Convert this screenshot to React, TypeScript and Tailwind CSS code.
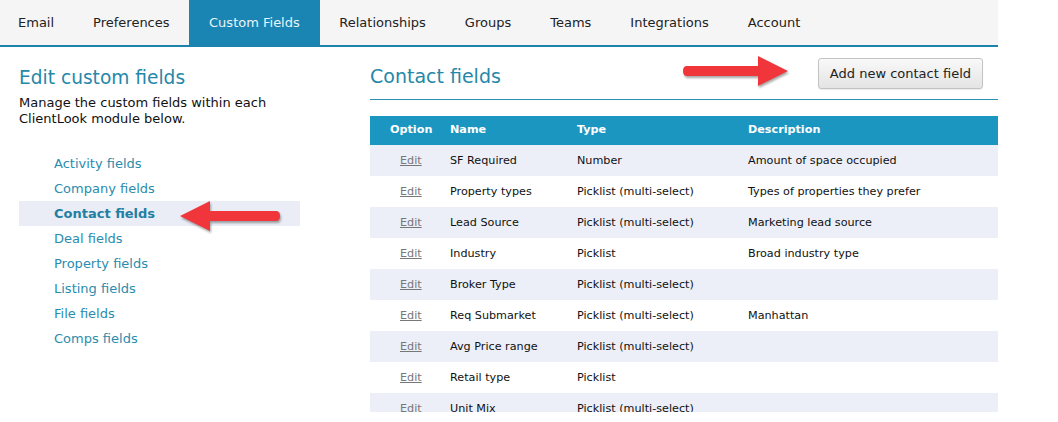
import React from "react";

const tabs = ["Email", "Preferences", "Custom Fields", "Relationships", "Groups", "Teams", "Integrations", "Account"];

const modules = [
  "Activity fields",
  "Company fields",
  "Contact fields",
  "Deal fields",
  "Property fields",
  "Listing fields",
  "File fields",
  "Comps fields",
];

const rows = [
  { name: "SF Required", type: "Number", desc: "Amount of space occupied" },
  { name: "Property types", type: "Picklist (multi-select)", desc: "Types of properties they prefer" },
  { name: "Lead Source", type: "Picklist (multi-select)", desc: "Marketing lead source" },
  { name: "Industry", type: "Picklist", desc: "Broad industry type" },
  { name: "Broker Type", type: "Picklist (multi-select)", desc: "" },
  { name: "Req Submarket", type: "Picklist (multi-select)", desc: "Manhattan" },
  { name: "Avg Price range", type: "Picklist (multi-select)", desc: "" },
  { name: "Retail type", type: "Picklist", desc: "" },
  { name: "Unit Mix", type: "Picklist (multi-select)", desc: "" },
];

function RedArrow({ dir, width }: { dir: "left" | "right"; width: number }) {
  const head = width - 30;
  return (
    <svg width={width + 4} height="34" viewBox={`0 0 ${width + 4} 34`} className="drop-shadow-[1px_2px_1px_rgba(0,0,0,0.35)]">
      <g transform={dir === "left" ? `translate(${width} 0) scale(-1 1)` : undefined}>
        <path
          d={`M4 12 H${head} V2 L${width} 17 L${head} 32 V22 H4 Q0 22 0 17 Q0 12 4 12 Z`}
          fill="#f0353b"
        />
      </g>
    </svg>
  );
}

export default function App() {
  return (
    <div className="h-[422px] w-[1058px] overflow-hidden bg-white text-[#222]" style={{ fontFamily: "Verdana, 'DejaVu Sans', sans-serif" }}>
      {/* top tabs */}
      <nav className="flex h-[47px] w-[998px] border-b-2 border-[#1b84ad] bg-[#f5f5f5] text-[13px]">
        {tabs.map((t) => (
          <div
            key={t}
            className={
              t === "Custom Fields"
                ? "flex items-center bg-[#1a85b2] px-[20px] text-[#e8f4fa]"
                : t === "Email"
                ? "flex items-center pl-[18px] pr-[19.5px] text-[#222]"
                : "flex items-center px-[19.5px] text-[#222]"
            }
          >
            {t}
          </div>
        ))}
      </nav>

      <div className="flex h-[365px] w-[998px] overflow-hidden">
        {/* sidebar */}
        <aside className="w-[300px] shrink-0 pl-[19px] pt-[18px]">
          <h1 className="text-[18.6px] leading-[26px] text-[#2688a8]">Edit custom fields</h1>
          <p className="mt-[4px] w-[270px] text-[13px] leading-[16px] text-[#111]">
            Manage the custom fields within each ClientLook module below.
          </p>
          <ul className="relative mt-[24px] text-[13px]">
            {modules.map((m) => (
              <li
                key={m}
                className={
                  m === "Contact fields"
                    ? "relative flex h-[25px] items-center bg-[#eaedf5] pl-[35px] font-bold text-[#1f7fa4]"
                    : "flex h-[25px] items-center pl-[35px] text-[#2b8cae]"
                }
              >
                {m}
                {m === "Contact fields" && (
                  <span className="absolute left-[161px] top-[-2px]">
                    <RedArrow dir="left" width={100} />
                  </span>
                )}
              </li>
            ))}
          </ul>
        </aside>

        {/* main */}
        <main className="ml-[70px] flex-1 pt-[11px]">
          <div className="relative flex h-[42px] items-center justify-between border-b border-[#2a8eb0] pb-[4px]">
            <h2 className="text-[19px] text-[#2688a8]">Contact fields</h2>
            <span className="absolute left-[313px] top-[-4px]">
              <RedArrow dir="right" width={105} />
            </span>
            <button className="mr-[15px] mt-[-6px] h-[31px] rounded-[3px] border border-[#c3c3c3] bg-gradient-to-b from-[#f9f9f9] to-[#e4e4e4] px-[11px] text-[13px] text-[#222] shadow-[0_1px_1px_rgba(0,0,0,0.08)]">
              Add new contact field
            </button>
          </div>

          <table className="mt-[16px] w-full border-collapse text-[11.2px]">
            <thead>
              <tr className="h-[29px] bg-[#1a96c0] text-left font-bold text-white">
                <th className="w-[80px] pl-[20px] font-bold">Option</th>
                <th className="w-[127px] font-bold">Name</th>
                <th className="w-[171px] font-bold">Type</th>
                <th className="font-bold">Description</th>
              </tr>
            </thead>
            <tbody>
              {rows.map((r, i) => (
                <tr key={r.name} className={i % 2 === 0 ? "h-[31px] bg-[#eceff8]" : "h-[31px] bg-white"}>
                  <td className="pl-[30px] pt-[2px]">
                    <span className="text-[#777] underline">Edit</span>
                  </td>
                  <td className="pt-[2px] text-[#111]">{r.name}</td>
                  <td className="pt-[2px] text-[#111]">{r.type}</td>
                  <td className="pt-[2px] text-[#111]">{r.desc}</td>
                </tr>
              ))}
            </tbody>
          </table>
        </main>
      </div>
    </div>
  );
}
